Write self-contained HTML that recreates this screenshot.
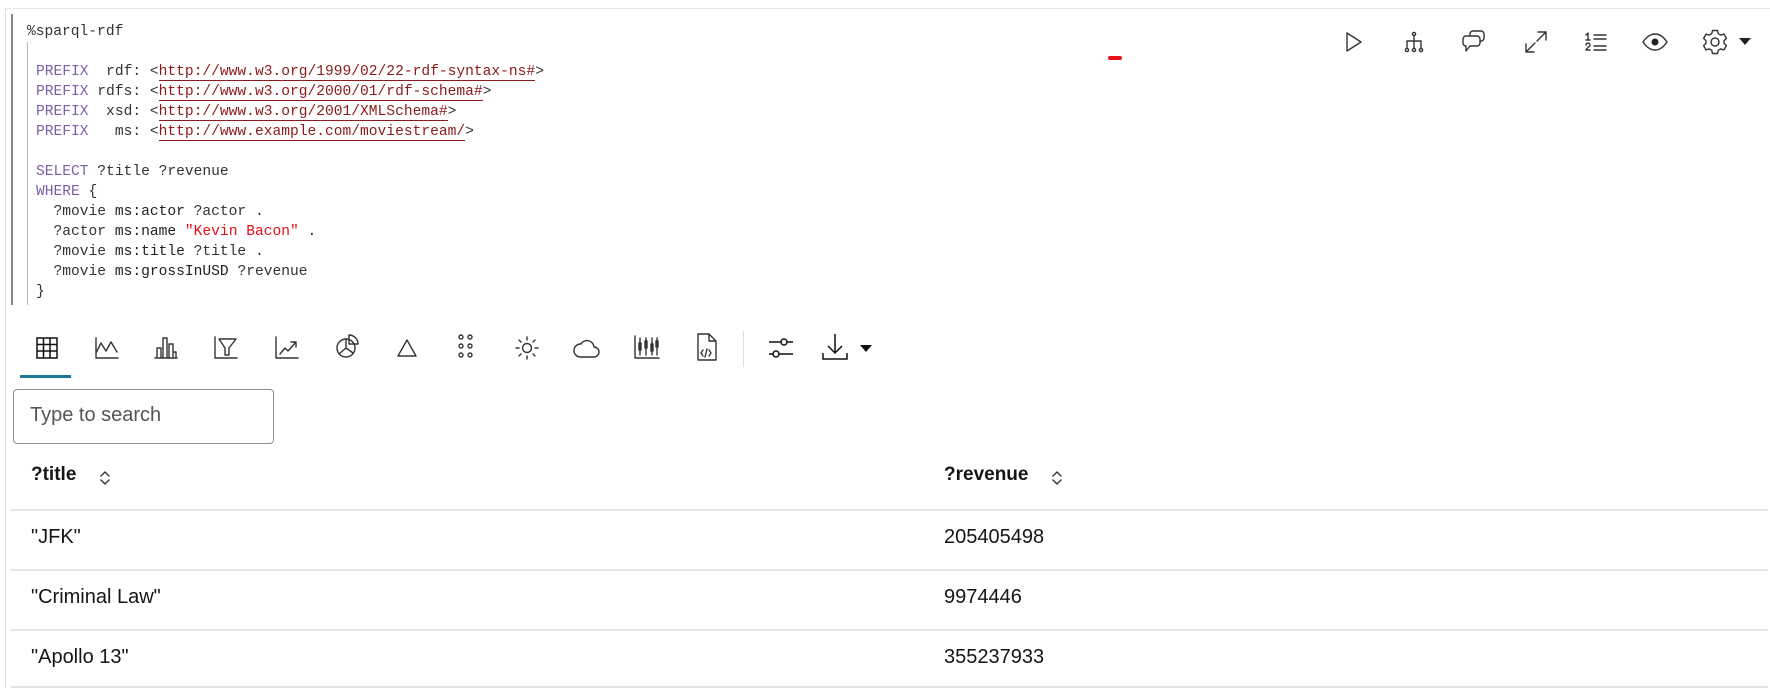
<!DOCTYPE html>
<html><head><meta charset="utf-8"><style>
*{margin:0;padding:0;box-sizing:border-box}
body{width:1770px;height:688px;background:#fff;position:relative;overflow:hidden;font-family:"Liberation Sans",sans-serif;color:#161513}
.abs{position:absolute}
.code{position:absolute;font-family:"Liberation Mono",monospace;font-size:14.6px;line-height:20px;white-space:pre;color:#333}
.kw{color:#7d5ea6}.url{color:#8b1a1a;border-bottom:1.5px solid #8b1a1a}.str{color:#e8101a}.pr{color:#222}
svg{position:absolute;overflow:visible}
.ic{fill:none;stroke:#333;stroke-width:1.4;stroke-linecap:round;stroke-linejoin:round}
.hline{position:absolute;left:11px;width:1757px;height:2px;background:#e4e4e4}
.cell{position:absolute;font-size:20px}
</style></head><body>
<div class="abs" style="left:5px;top:8px;width:1765px;height:680px;border-left:1px solid #e2e2e2;border-top:1px solid #e8e8e8"></div>
<div class="abs" style="left:11px;top:14px;width:2px;height:291px;background:#8a8a8a"></div>
<div class="abs" style="left:27px;top:42px;width:1px;height:263px;background:#bbb"></div>
<div class="code" style="left:27px;top:22px">%sparql-rdf</div>
<div class="code" style="left:36px;top:62px"><span class="kw">PREFIX</span>  rdf: &lt;<span class="url">http://www.w3.org/1999/02/22-rdf-syntax-ns#</span>&gt;
<span class="kw">PREFIX</span> rdfs: &lt;<span class="url">http://www.w3.org/2000/01/rdf-schema#</span>&gt;
<span class="kw">PREFIX</span>  xsd: &lt;<span class="url">http://www.w3.org/2001/XMLSchema#</span>&gt;
<span class="kw">PREFIX</span>   ms: &lt;<span class="url">http://www.example.com/moviestream/</span>&gt;

<span class="kw">SELECT</span> ?title ?revenue
<span class="kw">WHERE</span> {
  ?movie <span class="pr">ms:actor</span> ?actor .
  ?actor <span class="pr">ms:name</span> <span class="str">"Kevin Bacon"</span> .
  ?movie <span class="pr">ms:title</span> ?title .
  ?movie <span class="pr">ms:grossInUSD</span> ?revenue
}</div>
<div class="abs" style="left:1108px;top:56px;width:14px;height:4px;border-radius:2px;background:#e8101a"></div>

<!-- top right icons -->
<svg style="left:1343px;top:31px" width="22" height="22"><path class="ic" d="M4 2 L18 11 L4 20 Z"/></svg>
<svg style="left:1403px;top:31px" width="22" height="22"><g class="ic"><circle cx="11" cy="3" r="1.6"/><path d="M11 4.6V10M4 10H18M4 10V17M11 10V17M18 10V17"/><circle cx="4" cy="19" r="1.6"/><circle cx="11" cy="19" r="1.6"/><circle cx="18" cy="19" r="1.6"/></g></svg>
<svg style="left:1462px;top:30px" width="26" height="24"><g class="ic"><path d="M8 5V4a3 3 0 0 1 3-3h8a3 3 0 0 1 3 3v4a3 3 0 0 1-3 3h-1"/><path d="M4 6h11a3 3 0 0 1 3 3v4a3 3 0 0 1-3 3H8l-4 5v-5a3 3 0 0 1-3-3V9a3 3 0 0 1 3-3z"/></g></svg>
<svg style="left:1524px;top:30px" width="24" height="24"><g class="ic"><path d="M14 2H22V10M22 2L13 11M2 14V22H10M2 22L11 13"/></g></svg>
<svg style="left:1584px;top:31px" width="24" height="22"><g class="ic"><path d="M2 4L4 2V9M2 9H6M10 4H22M10 8H22M2 14a2 2 0 0 1 4 0c0 2-4 3-4 5h4M10 15H22M10 19H22"/></g></svg>
<svg style="left:1642px;top:33px" width="26" height="18"><g class="ic"><path d="M1 9C5 3 9 1 13 1s8 2 12 8c-4 6-8 8-12 8S5 15 1 9z"/></g><circle cx="13" cy="9" r="3.5" fill="#222"/></svg>
<svg style="left:1702px;top:29px" width="26" height="26"><g class="ic"><path d="M10.5 1.5h5l.8 3.2 2.4 1.4 3.2-1 2.5 4.3-2.4 2.3v2.6l2.4 2.3-2.5 4.3-3.2-1-2.4 1.4-.8 3.2h-5l-.8-3.2-2.4-1.4-3.2 1-2.5-4.3 2.4-2.3v-2.6L1.6 9.4 4.1 5.1l3.2 1 2.4-1.4z"/><circle cx="13" cy="13" r="4"/></g></svg>
<svg style="left:1739px;top:38px" width="12" height="8"><path d="M0 0H12L6 7Z" fill="#222"/></svg>

<!-- chart toolbar -->
<svg style="left:36px;top:337px" width="22" height="22"><g fill="none" stroke="#111" stroke-width="1.5"><rect x="1" y="1" width="20" height="20"/><path d="M1 7.5H21M1 14H21M7.5 1V21M14 1V21"/></g></svg>
<svg style="left:95px;top:337px" width="24" height="22"><g class="ic"><path d="M1 1V21H23M1 16L6 6L11 14L16 5L22 15"/></g></svg>
<svg style="left:154px;top:336px" width="24" height="23"><g class="ic"><path d="M1 22H23M3 22V12H7V22M9 22V2H13V22M15 22V8H19V22M19 22V16H22V22"/></g></svg>
<svg style="left:214px;top:336px" width="24" height="23"><g class="ic"><path d="M1 1V22H23M5 3H22L15 12V19H11V12Z"/></g></svg>
<svg style="left:275px;top:336px" width="24" height="23"><g class="ic"><path d="M1 1V22H23M5 18L10 12L13 15L21 6M16 6H21V11"/></g></svg>
<svg style="left:335px;top:334px" width="24" height="26"><g class="ic"><circle cx="11" cy="14" r="9"/><path d="M11 14V5M11 14L4 20M11 14L18 19"/><path d="M14 1V10H23A9 9 0 0 0 14 1Z"/></g></svg>
<svg style="left:396px;top:337px" width="22" height="22"><path class="ic" d="M11 3L20 19H2Z"/></svg>
<svg style="left:455px;top:334px" width="22" height="26"><g class="ic"><circle cx="6" cy="3" r="2"/><circle cx="15" cy="3" r="2"/><circle cx="6" cy="12" r="2"/><circle cx="15" cy="12" r="2"/><circle cx="6" cy="21" r="2"/><circle cx="15" cy="21" r="2"/></g></svg>
<svg style="left:515px;top:336px" width="24" height="24"><g class="ic"><circle cx="12" cy="12" r="4.5"/><path d="M12 1V4M12 20V23M1 12H4M20 12H23M4 4L6 6M18 18L20 20M4 20L6 18M18 6L20 4"/></g></svg>
<svg style="left:574px;top:337px" width="26" height="22"><path class="ic" d="M6 20H20A5 5 0 0 0 20 10A7 7 0 0 0 7 7A6.5 6.5 0 0 0 6 20Z"/></svg>
<svg style="left:634px;top:335px" width="26" height="24"><g class="ic"><path d="M1 1V23H25M6 3V20M5 8H7V15H5ZM12 3V20M11 6H13V13H11ZM18 3V20M17 9H19V16H17ZM23 3V20M22 6H24V12H22Z"/></g></svg>
<svg style="left:696px;top:333px" width="22" height="28"><g class="ic"><path d="M2 1H13L20 8V27H2ZM13 1V8H20"/><path d="M7 17L5 20L7 23M11 16L9 24M13 17L15 20L13 23"/></g></svg>
<div class="abs" style="left:743px;top:331px;width:1px;height:36px;background:#ddd"></div>
<svg style="left:768px;top:336px" width="26" height="24"><g fill="none" stroke="#111" stroke-width="1.5"><path d="M1 6H13M19 6H25M1 18H5M11 18H25"/><circle cx="16" cy="6" r="3"/><circle cx="8" cy="18" r="3"/></g></svg>
<svg style="left:822px;top:333px" width="26" height="28"><g fill="none" stroke="#111" stroke-width="1.5"><path d="M13 1V20M6 13L13 20L20 13M1 20V26H25V20"/></g></svg>
<svg style="left:860px;top:345px" width="12" height="8"><path d="M0 0H12L6 7Z" fill="#111"/></svg>
<div class="abs" style="left:20px;top:375px;width:51px;height:3px;background:#1c7797"></div>

<div class="abs" style="left:13px;top:389px;width:261px;height:55px;border:1px solid #8f8f8f;border-radius:4px"></div>
<div class="abs" style="left:30px;top:404px;font-size:20px;color:#555">Type to search</div>

<div class="cell" style="left:31px;top:464px;font-weight:bold;font-size:19px">?title</div>
<svg style="left:99px;top:470px" width="12" height="16"><path class="ic" d="M2 6L6 2L10 6M2 10L6 14L10 10"/></svg>
<div class="cell" style="left:944px;top:464px;font-weight:bold;font-size:19px">?revenue</div>
<svg style="left:1051px;top:470px" width="12" height="16"><path class="ic" d="M2 6L6 2L10 6M2 10L6 14L10 10"/></svg>
<div class="hline" style="top:509px"></div>
<div class="cell" style="left:31px;top:526px">"JFK"</div>
<div class="cell" style="left:944px;top:526px">205405498</div>
<div class="hline" style="top:569px"></div>
<div class="cell" style="left:31px;top:586px">"Criminal Law"</div>
<div class="cell" style="left:944px;top:586px">9974446</div>
<div class="hline" style="top:629px"></div>
<div class="cell" style="left:31px;top:646px">"Apollo 13"</div>
<div class="cell" style="left:944px;top:646px">355237933</div>
<div class="hline" style="top:686px"></div>
</body></html>
